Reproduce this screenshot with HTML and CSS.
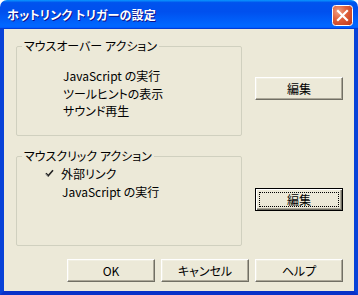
FILE: index.html
```html
<!DOCTYPE html>
<html lang="ja">
<head>
<meta charset="utf-8">
<link rel="stylesheet" href="styles.css">
</head>
<body>
<div class="window">
  <div class="titlebar">
    <span class="title">ホットリンク トリガーの設定</span>
    <span class="close">
      <svg width="21" height="21" viewBox="0 0 21 21">
        <defs>
          <radialGradient id="cg" cx="0.3" cy="0.3" r="0.9">
            <stop offset="0" stop-color="#f0a184"/>
            <stop offset="0.45" stop-color="#e0603b"/>
            <stop offset="1" stop-color="#c23a1c"/>
          </radialGradient>
        </defs>
        <rect x="0.5" y="0.5" width="20" height="20" rx="3" fill="url(#cg)" stroke="#fff"/>
        <path d="M6 6 L15 15 M15 6 L6 15" stroke="#fff" stroke-width="2.2" stroke-linecap="square"/>
      </svg>
    </span>
  </div>
  <div class="frame">
    <div class="client">
      <div class="row">
        <fieldset class="group">
          <legend>マウスオーバー アクション</legend>
          <div class="items items-over">
            <div class="item">JavaScript の実行</div>
            <div class="item">ツールヒントの表示</div>
            <div class="item">サウンド再生</div>
          </div>
        </fieldset>
        <button class="btn btn-edit1">編集</button>
      </div>
      <div class="row">
        <fieldset class="group">
          <legend>マウスクリック アクション</legend>
          <div class="items items-click">
            <div class="item checked">
              <svg class="check" width="9" height="9" viewBox="0 0 9 9">
                <path d="M1 4.2 L3.2 6.8 L8 1.2" fill="none" stroke="#222" stroke-width="1.6"/>
                <path d="M0.8 5 L2.6 7.2" fill="none" stroke="#9a9a9a" stroke-width="1"/>
              </svg>
              <span>外部リンク</span>
            </div>
            <div class="item sub">JavaScript の実行</div>
          </div>
        </fieldset>
        <button class="btn btn-default btn-edit2"><span class="focus">編集</span></button>
      </div>
      <div class="actions">
        <button class="btn">OK</button>
        <button class="btn">キャンセル</button>
        <button class="btn">ヘルプ</button>
      </div>
    </div>
  </div>
</div>
</body>
</html>
```

FILE: styles.css
```css
* { box-sizing: border-box; }
html, body { margin: 0; padding: 0; background: #fff; }
body {
  font-family: "Noto Sans CJK JP", "Liberation Sans", sans-serif;
  font-size: 12px;
  font-feature-settings: "palt" 1;
  color: #000;
}
.window {
  width: 358px;
  height: 295px;
  display: flex;
  flex-direction: column;
}
.titlebar {
  height: 29px;
  display: flex;
  align-items: center;
  justify-content: space-between;
  padding: 0 5px 1px 7px;
  background: linear-gradient(180deg, #0997ff 0, #0053ee 9%, #0050ee 40%, #0066ff 86%, #0066ff 92%, #005bff 95%, #003dd7 97%, #003dd7 100%);
  border-radius: 7px 7px 0 0;
}
.title {
  color: #fff;
  font-weight: bold;
  font-size: 12px;
  line-height: 14px;
  letter-spacing: 0.2px;
  text-shadow: 1px 1px #0f1089;
  margin-top: 1px;
}
.close { display: block; width: 21px; height: 21px; margin-top: 2px; }
.close svg { display: block; }
.frame {
  flex: 1;
  display: flex;
  border-left: 4px solid #0842d8;
  border-right: 4px solid #0842d8;
  border-bottom: 4px solid #0831c8;
  box-shadow: inset 1px 0 #0a2ec0, inset -1px 0 #0a2ec0, inset 0 -1px #0a2ec0;
}
.client {
  flex: 1;
  background: #ece9d8;
  padding: 10px 11px 9px 12px;
  display: flex;
  flex-direction: column;
  gap: 13px;
}
.row {
  display: flex;
  gap: 13px;
  align-items: flex-start;
}
.group {
  width: 226px;
  margin: 0;
  padding: 0;
  border: 1px solid #d0d0bf;
  border-radius: 2px;
  min-width: 0;
}
.group legend {
  margin-left: 5px;
  padding: 0 2px;
  font-size: 12px;
  line-height: 14px;
}
.items {
  height: 82px;
}
.items-over { padding: 14px 0 0 46px; }
.items-click { padding: 2px 0 0 28px; }
.item {
  height: 17.5px;
  line-height: 17px;
  white-space: nowrap;
}
.item.checked { display: flex; align-items: center; gap: 7px; }
.check { display: block; }
.item.sub { padding-left: 17px; }

.btn {
  width: 88px;
  height: 23px;
  padding: 0;
  margin: 0;
  font: inherit;
  font-size: 12px;
  color: #000;
  background: #ece9d8;
  border: 1px solid;
  border-color: #fff #716f64 #716f64 #fff;
  box-shadow: inset -1px -1px #aca899, inset 1px 1px #f1efe2;
  display: flex;
  align-items: center;
  justify-content: center;
}
.btn-edit1 { margin-top: 38px; }
.btn-edit2 { margin-top: 39px; }
.btn-default {
  border: 1px solid #000;
  box-shadow: inset 1px 1px #fff, inset -1px -1px #716f64, inset -2px -2px #aca899;
  padding: 3px;
}
.focus {
  flex: 1;
  align-self: stretch;
  border: 1px dotted #000;
  display: flex;
  align-items: center;
  justify-content: center;
}
.actions {
  display: flex;
  justify-content: flex-end;
  gap: 6px;
}
```
